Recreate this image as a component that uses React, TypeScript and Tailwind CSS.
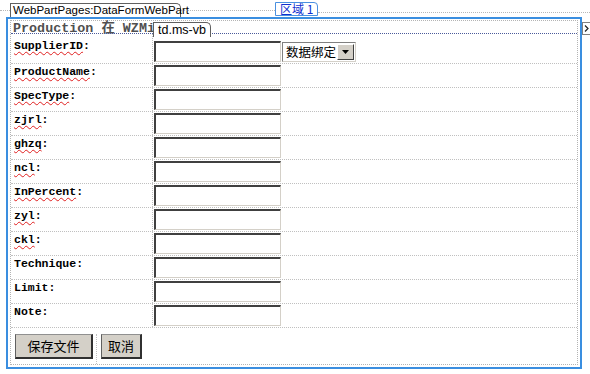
import React from "react";

type Field = { name: string; wavy: boolean };

const fields: Field[] = [
  { name: "ProductName", wavy: true },
  { name: "SpecType", wavy: true },
  { name: "zjrl", wavy: true },
  { name: "ghzq", wavy: true },
  { name: "ncl", wavy: true },
  { name: "InPercent", wavy: true },
  { name: "zyl", wavy: true },
  { name: "ckl", wavy: true },
  { name: "Technique", wavy: false },
  { name: "Limit", wavy: false },
  { name: "Note", wavy: false },
];

function Label({ f }: { f: Field }) {
  return (
    <>
      {f.wavy ? (
        <span className="underline decoration-wavy decoration-[#e02020] decoration-1 underline-offset-[2px]">
          {f.name}
        </span>
      ) : (
        f.name
      )}
      :
    </>
  );
}

function Input() {
  return (
    <div className="w-[127px] h-[21px] bg-white border-t-2 border-l-2 border-r border-b border-t-[#404040] border-l-[#404040] border-r-[#d4d0c8] border-b-[#d4d0c8]" />
  );
}

const labelCell =
  "w-[142px] pl-[3px] border-r border-dotted border-[#c0c0c0] font-['Liberation_Mono',monospace] font-bold text-[11.5px] leading-[14px] text-black whitespace-nowrap";

export default function App() {
  return (
    <div className="relative w-[590px] h-[374px] bg-white overflow-hidden font-['Liberation_Sans',sans-serif]">
      {/* top bar */}
      <div className="flex items-start h-[17px]">
        <div className="w-[10px] mt-[10px] border-t border-dotted border-[#b8b8b8]" />
        <div className="mt-[3px] w-[171px] h-[14px] border border-b-0 border-[#606060] rounded-tr-[5px] bg-white pl-[2px] text-[11.5px] leading-[13px] text-black">
          WebPartPages:DataFormWebPart
        </div>
        <div className="w-[94px] mt-[10px] border-t border-dotted border-[#b8b8b8]" />
        <div className="mt-[2px] h-[14px] border border-[#4a90e0] rounded-tr-[4px] bg-white px-[4px] text-[12px] leading-[12px] text-[#1030d0] font-['Noto_Sans_CJK_SC',sans-serif]">
          区域 1
        </div>
        <div className="flex-1 mt-[12px] border-t border-dotted border-[#b8b8b8]" />
      </div>

      {/* blue frame */}
      <div className="ml-[6px] w-[576px] h-[352px] border-2 border-[#3a8ee0] bg-white pt-[1px] px-[2px] pb-[2px]">
        <div className="h-full border border-dotted border-[#b4b4b4] flex flex-col">
          {/* title */}
          <div className="h-[12px] pl-[2px] pt-[1px] font-['Liberation_Mono','Noto_Sans_CJK_SC',monospace] font-bold text-[13.4px] leading-[14px] text-[#505050] whitespace-nowrap">
            Production 在 WZMi
          </div>
          {/* table */}
          <div className="border-t border-dotted border-[#4a5a9a]">
            {/* row 1 */}
            <div className="flex h-[30px] border-b border-dotted border-[#c0c0c0]">
              <div className={labelCell + " pt-[5px]"}>
                <Label f={{ name: "SupplierID", wavy: true }} />
              </div>
              <div className="flex-1 pl-[1px] pt-[7px] flex items-start">
                <Input />
                <div className="ml-[1px] mt-[1px] w-[74px] h-[20px] bg-white border-t border-l border-[#808080] border-r border-b border-r-[#d4d0c8] border-b-[#d4d0c8] flex items-center">
                  <span className="pl-[3px] text-[12.5px] leading-[14px] text-black font-['Noto_Sans_CJK_SC',sans-serif]">
                    数据绑定
                  </span>
                  <div className="ml-auto mr-[1px] w-[17px] h-[16px] bg-[#d4d0c8] border border-t-white border-l-white border-r-[#404040] border-b-[#404040] flex items-center justify-center">
                    <svg width="7" height="4" viewBox="0 0 7 4">
                      <path d="M0 0h7L3.5 4z" fill="#000" />
                    </svg>
                  </div>
                </div>
              </div>
            </div>
            {fields.map((f) => (
              <div key={f.name} className="flex h-[24px] border-b border-dotted border-[#c0c0c0]">
                <div className={labelCell + " pt-[1px]"}>
                  <Label f={f} />
                </div>
                <div className="flex-1 pl-[1px] pt-[1px]">
                  <Input />
                </div>
              </div>
            ))}
          </div>
          {/* buttons */}
          <div className="flex flex-1 items-start pt-[6px]">
            <div className="pl-[4px] pr-[3px] h-full border-r border-dotted border-[#c0c0c0]">
              <button className="w-[78px] h-[25px] bg-[#d4d0c8] border border-t-[#909090] border-l-[#606060] border-r-2 border-b-2 border-r-[#303030] border-b-[#303030] text-[13px] leading-[14px] text-black font-['Noto_Sans_CJK_SC',sans-serif]">
                保存文件
              </button>
            </div>
            <div className="pl-[4px]">
              <button className="w-[41px] h-[25px] bg-[#d4d0c8] border border-t-[#909090] border-l-[#606060] border-r-2 border-b-2 border-r-[#303030] border-b-[#303030] text-[13px] leading-[14px] text-black font-['Noto_Sans_CJK_SC',sans-serif]">
                取消
              </button>
            </div>
          </div>
        </div>
      </div>

      {/* td.ms-vb tag overlay */}
      <div className="absolute left-[153px] top-[22px] h-[15px] px-[4px] border border-b-0 border-[#606060] rounded-tr-[5px] bg-white text-[12.5px] leading-[14px] text-black">
        td.ms-vb
      </div>
      {/* chevron overlay */}
      <div className="absolute left-[582px] top-[22px] w-[9px] h-[13px] border border-[#808080] bg-white flex items-center justify-center">
        <svg width="5" height="7" viewBox="0 0 5 7">
          <path d="M1 0.5L4 3.5L1 6.5" stroke="#202020" strokeWidth="1.2" fill="none" />
        </svg>
      </div>
    </div>
  );
}
